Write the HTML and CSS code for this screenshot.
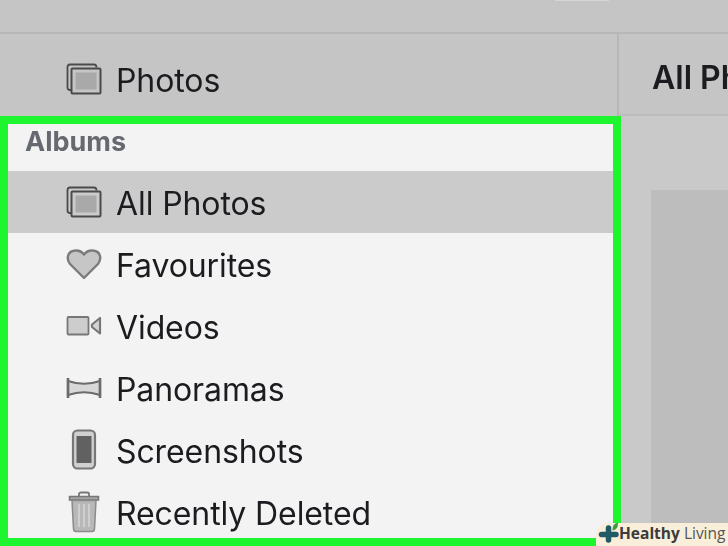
FILE: index.html
```html
<!DOCTYPE html>
<html lang="en">
<head>
  <meta charset="UTF-8">
  <meta name="viewport" content="width=device-width, initial-scale=1.0">
  <title>Photos</title>
  <link rel="stylesheet" href="styles.css">
</head>
<body>
<svg class="defs" width="0" height="0">
  <symbol id="stack" viewBox="0 0 36 32">
    <path d="M5.500 27H4Q1.500 27 1.500 24.500V4Q1.500 1.500 4 1.500H28Q30.500 1.500 30.500 4.500" fill="none" stroke="#4a4a4a" stroke-width="1.800"/>
    <rect x="5.500" y="5.500" width="29" height="25" rx="1" fill="none" stroke="#4a4a4a" stroke-width="2"/>
    <rect x="9.500" y="9.500" width="21" height="17" fill="#a9a9a9"/>
  </symbol>
</svg>

<div class="topbar"><span class="topbar-tab"></span></div>

<div class="header">
  <div class="header-left">
    <svg class="icon"><use href="#stack"/></svg>
    <span class="label">Photos</span>
  </div>
  <div class="header-right">All Photos</div>
</div>

<div class="content">
  <div class="sidebar">
    <div class="sidebar-title">Albums</div>

    <div class="row selected">
      <svg class="icon"><use href="#stack"/></svg>
      <span class="label">All Photos</span>
    </div>

    <div class="row">
      <svg class="icon" viewBox="0 0 36 32">
        <path d="M18 30L4 16Q1 12 2 8Q3.500 2.500 10 2.500Q15 2.500 18 6.500Q21 2.500 26 2.500Q32.500 2.500 34 8Q35 12 32 16Z" fill="#c6c6c6" stroke="#7b7b7b" stroke-width="2.400" stroke-linejoin="round"/>
      </svg>
      <span class="label">Favourites</span>
    </div>

    <div class="row">
      <svg class="icon" viewBox="0 0 36 32">
        <rect x="1.500" y="7" width="21" height="17.500" rx="1" fill="#cdcdcd" stroke="#777" stroke-width="1.800"/>
        <path d="M34 8V23.500L26 17V14.500Z" fill="#d4d4d4" stroke="#777" stroke-width="2.200" stroke-linejoin="round"/>
      </svg>
      <span class="label">Videos</span>
    </div>

    <div class="row">
      <svg class="icon" viewBox="0 0 36 32">
        <path d="M2 9Q18 14.500 34 9V23Q18 17.500 2 23Z" fill="#d8d8d8" stroke="#6c6c6c" stroke-width="2.200"/>
        <path d="M2 6V26M34 6V26" stroke="#6c6c6c" stroke-width="2.600"/>
      </svg>
      <span class="label">Panoramas</span>
    </div>

    <div class="row">
      <svg class="icon tall" viewBox="0 0 36 42">
        <rect x="7" y="1.500" width="22" height="38" rx="4.500" fill="#d0d0d0" stroke="#777" stroke-width="2.200"/>
        <rect x="10.500" y="7" width="15" height="27" fill="#616161"/>
      </svg>
      <span class="label">Screenshots</span>
    </div>

    <div class="row">
      <svg class="icon tall" viewBox="0 0 36 42">
        <path d="M13 5V3Q13 1.500 15 1.500H21Q23 1.500 23 3V5" fill="none" stroke="#777" stroke-width="1.800"/>
        <path d="M3.500 5.500H32.500V9H3.500Z" fill="#a5a5a5" stroke="#777" stroke-width="1.500"/>
        <path d="M6 9.500H30L28.500 38Q28.300 40.500 26 40.500H10Q7.700 40.500 7.500 38Z" fill="#b8b8b8" stroke="#8a8a8a" stroke-width="1.500"/>
        <path d="M13 13V36M18 13V36M23 13V36" stroke="#cfcfcf" stroke-width="2"/>
      </svg>
      <span class="label">Recently Deleted</span>
    </div>
  </div>

  <div class="main">
    <div class="panel"></div>
  </div>
</div>

<div class="watermark">
  <svg class="watermark-logo" viewBox="0 0 21 25">
    <path d="M3.500 14.500H18M10.500 8V20" fill="none" stroke="#1f5a66" stroke-width="5.500" stroke-linecap="round"/>
    <path d="M14.500 10.500Q14 3.500 20 2.500Q20.500 9.500 14.500 10.500Z" fill="#3d9a46"/>
  </svg>
  <span class="watermark-bold">Healthy</span>&nbsp;<span class="watermark-light">Living</span>
</div>
</body>
</html>
```

FILE: styles.css
```css
html, body {
  margin: 0;
  padding: 0;
}
body {
  width: 728px;
  height: 546px;
  overflow: hidden;
  position: relative;
  background-color: #c9c9c9;
  font-family: Inter, "Liberation Sans", sans-serif;
  color: #1c1c20;
}
.defs {
  display: block;
  height: 0;
}
.topbar {
  height: 32px;
  background: #c5c5c5;
  border-bottom: 2px solid #b7b7b7;
}
.topbar-tab {
  display: block;
  width: 54px;
  height: 1px;
  margin-left: 555px;
  background: #d6d6d6;
}
.header {
  display: flex;
  height: 82px;
  background: #c5c5c5;
}
.header-left {
  width: 619px;
  display: flex;
  align-items: center;
  padding: 8px 0 0 66px;
  box-sizing: border-box;
  border-right: 2px solid #b7b7b7;
}
.header-right {
  flex: 1;
  padding-left: 33px;
  padding-top: 24px;
  font-size: 32px;
  font-weight: 600;
  white-space: nowrap;
  overflow: hidden;
  box-sizing: border-box;
  border-bottom: 2px solid #bcbcbc;
  filter: blur(0.4px);
}
.label {
  font-size: 32px;
  padding-top: 2px;
  letter-spacing: -0.1px;
  filter: blur(0.4px);
}
.icon {
  width: 36px;
  height: 32px;
  margin-right: 14px;
  flex: none;
  filter: blur(0.4px);
}
.tall {
  height: 42px;
}
.content {
  display: flex;
  height: 430px;
}
.sidebar {
  width: 621px;
  flex: none;
  box-sizing: border-box;
  border: 8px solid #1ff52e;
  background: #f3f3f3;
  overflow: hidden;
}
.sidebar-title {
  height: 47px;
  box-sizing: border-box;
  padding: 1px 0 0 17px;
  font-size: 27px;
  font-weight: 700;
  color: #666a70;
  filter: blur(0.4px);
}
.row {
  height: 62px;
  display: flex;
  align-items: center;
  padding-left: 58px;
}
.selected {
  background: #cbcbcb;
}
.main {
  flex: 1;
  padding: 74px 0 0 30px;
}
.panel {
  height: 100%;
  background: #bdbdbd;
}
.watermark {
  position: absolute;
  right: 0;
  bottom: 0;
  width: 132px;
  height: 23px;
  box-sizing: border-box;
  padding: 0 0 4px 2px;
  display: flex;
  align-items: center;
  background: #f8eed9;
  border-top-left-radius: 12px;
  font-family: "Open Sans", sans-serif;
  font-size: 15.500px;
  white-space: nowrap;
}
.watermark-logo {
  width: 21px;
  height: 25px;
  flex: none;
}
.watermark-bold {
  font-weight: 700;
  color: #3b3b3b;
}
.watermark-light {
  color: #555;
}
```
